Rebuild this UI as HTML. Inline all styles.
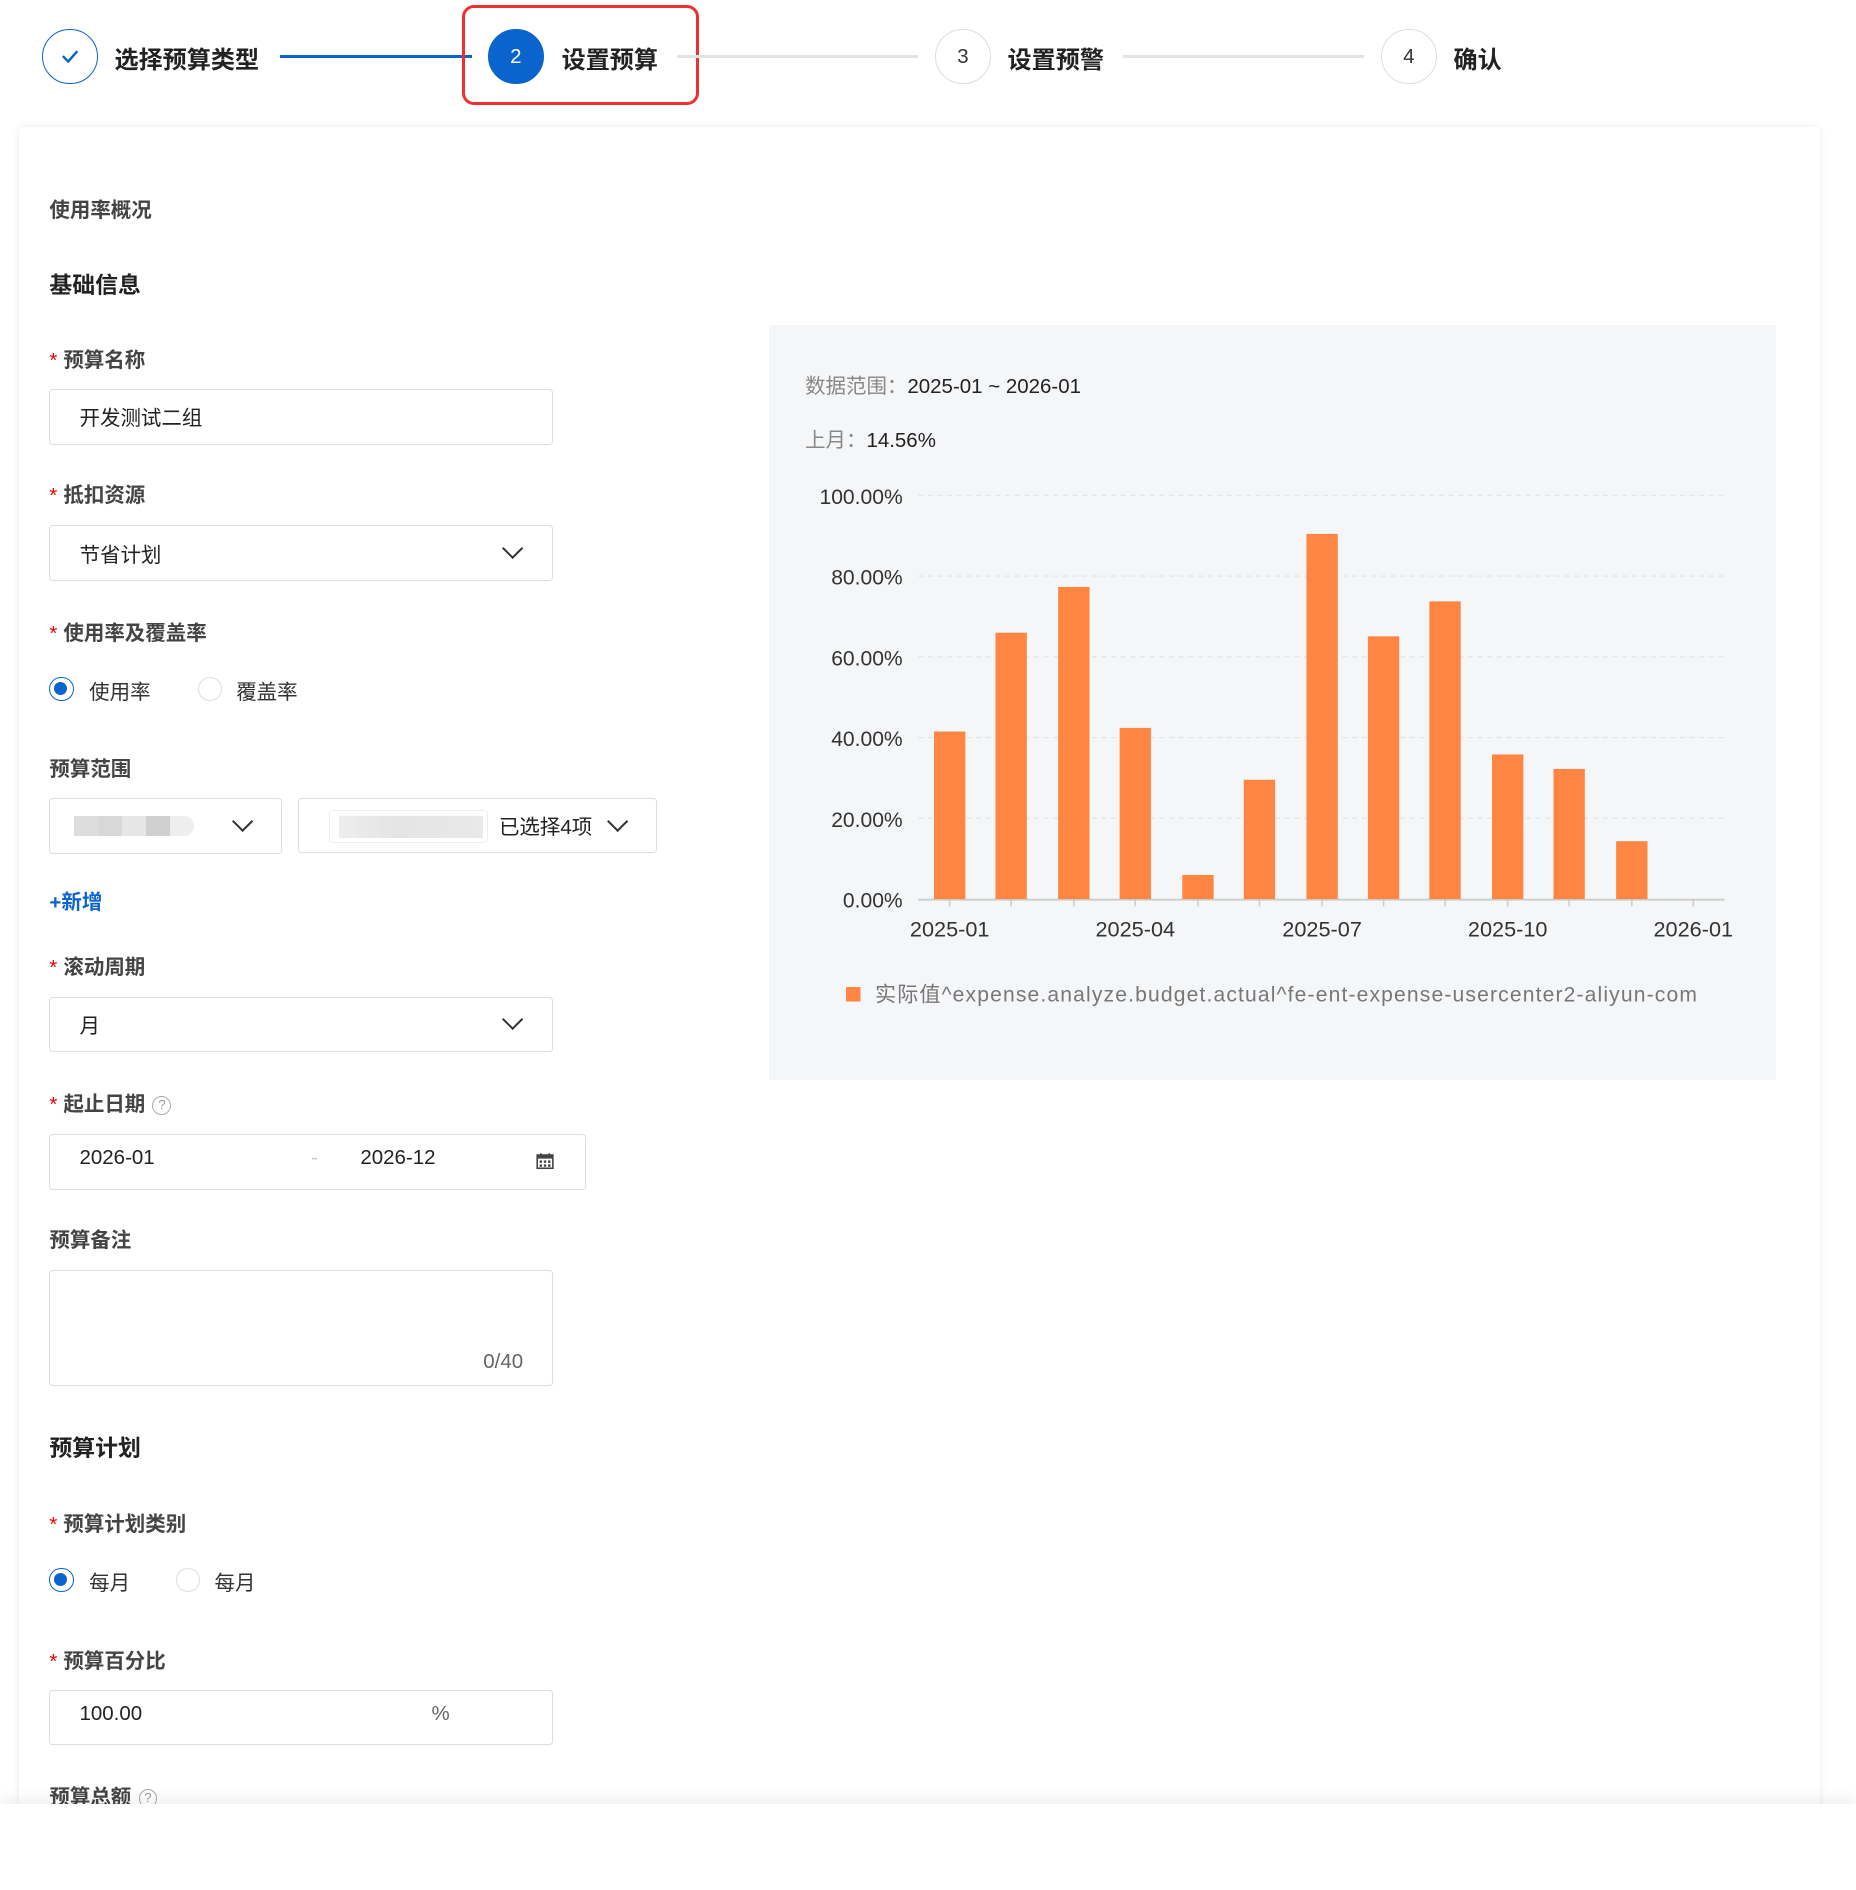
<!DOCTYPE html>
<html><head><meta charset="utf-8"><style>
html,body{margin:0;padding:0;background:#fff;}
body{width:1856px;height:1890px;overflow:hidden;position:relative;}
#w{zoom:1.2052;position:absolute;left:0;top:0;width:1540px;height:1568px;font-family:"Liberation Sans","Noto Sans CJK SC",sans-serif;color:#333;}
.a{position:absolute;white-space:nowrap;}
.circ{position:absolute;width:46px;height:46px;border-radius:50%;box-sizing:border-box;border:1px solid #ddd;text-align:center;line-height:44px;font-size:17px;color:#333;}
.st{font-size:20px;font-weight:bold;color:#222;}
.line{position:absolute;height:2px;background:#e3e3e3;top:46px;}
.card{position:absolute;left:16px;top:105px;width:1494px;height:1450px;background:#fff;box-shadow:0 0 6px rgba(0,0,0,.08);border-radius:3px;}
.lab{font-size:17px;color:#444;font-weight:bold;margin-top:-3px;}
.lab .r{color:#e00;margin-right:5px;font-weight:normal;}
.h{font-size:19px;font-weight:bold;color:#222;margin-top:-3px;}
.tx{font-size:17px;color:#222;margin-top:-2px;}
.box{position:absolute;border:1px solid #ddd;border-radius:3px;box-sizing:border-box;background:#fff;}
.chev{position:absolute;width:11px;height:11px;border-right:2px solid #333;border-bottom:2px solid #333;transform:rotate(45deg);}
.radio{position:absolute;width:20px;height:20px;border-radius:50%;box-sizing:border-box;border:1px solid #ddd;background:#fff;}
.radio.on{border:1.5px solid #0b63ce;}
.radio.on::after{content:"";position:absolute;left:3px;top:3px;width:11px;height:11px;border-radius:50%;background:#0b63ce;}
.q{display:inline-block;width:14px;height:14px;border:1px solid #aaa;border-radius:50%;font-size:11px;line-height:14px;text-align:center;color:#999;font-weight:normal;vertical-align:middle;margin-left:6px;}
</style></head><body><div id="w">
<div class="circ" style="left:35px;top:24px;border-color:#0b63ce;"><svg width="20" height="20" viewBox="0 0 20 20" style="margin-top:12px"><path d="M4 10 L8.5 14.5 L16 6" fill="none" stroke="#0b63ce" stroke-width="2"/></svg></div>
<div class="a st" style="left:95px;top:33px;">选择预算类型</div>
<div class="line" style="left:232px;width:160px;background:#0b63ce;"></div>
<div class="a" style="left:383px;top:4px;width:197px;height:83px;border:3px solid #f03030;border-radius:10px;box-sizing:border-box;"></div>
<div class="circ" style="left:405px;top:24px;background:#0b63ce;border-color:#0b63ce;color:#fff;">2</div>
<div class="a st" style="left:466px;top:33px;">设置预算</div>
<div class="line" style="left:562px;width:200px;"></div>
<div class="circ" style="left:776px;top:24px;">3</div>
<div class="a st" style="left:836px;top:33px;">设置预警</div>
<div class="line" style="left:932px;width:200px;"></div>
<div class="circ" style="left:1146px;top:24px;">4</div>
<div class="a st" style="left:1206px;top:33px;">确认</div>

<div class="card"></div>
<div class="a lab" style="left:41px;top:163px;">使用率概况</div>
<div class="a h" style="left:41px;top:224px;">基础信息</div>

<div class="a lab" style="left:41px;top:288px;"><span class="r">*</span>预算名称</div>
<div class="box" style="left:41px;top:323px;width:418px;height:46px;"></div>
<div class="a tx" style="left:66px;top:335px;">开发测试二组</div>

<div class="a lab" style="left:41px;top:400px;"><span class="r">*</span>抵扣资源</div>
<div class="box" style="left:41px;top:436px;width:418px;height:46px;"></div>
<div class="a tx" style="left:66px;top:448px;">节省计划</div>
<div class="chev" style="left:419px;top:449px;"></div>

<div class="a lab" style="left:41px;top:514px;"><span class="r">*</span>使用率及覆盖率</div>
<div class="radio on" style="left:41px;top:562px;"></div>
<div class="a tx" style="left:74px;top:562px;color:#333;">使用率</div>
<div class="radio" style="left:164px;top:562px;"></div>
<div class="a tx" style="left:196px;top:562px;color:#333;">覆盖率</div>

<div class="a lab" style="left:41px;top:627px;">预算范围</div>
<div class="box" style="left:41px;top:662px;width:193px;height:47px;"></div>
<div class="a" style="left:61px;top:677px;width:100px;height:17px;background:linear-gradient(90deg,#ddd 0 20%,#d8d8d8 20% 40%,#e6e6e6 40% 60%,#d0d0d0 60% 80%,#eee 80%);border-radius:0 9px 9px 0;"></div>
<div class="chev" style="left:195px;top:675px;"></div>
<div class="box" style="left:247px;top:662px;width:298px;height:46px;"></div>
<div class="a" style="left:273px;top:672px;width:130px;height:26px;border:1px solid #eee;border-radius:3px;"></div>
<div class="a" style="left:281px;top:677px;width:120px;height:18px;background:linear-gradient(90deg,#eee,#e4e4e4 40%,#e9e9e9);"></div>
<div class="a tx" style="left:414px;top:674px;">已选择4项</div>
<div class="chev" style="left:506px;top:675px;"></div>

<div class="a" style="left:41px;top:734px;font-size:17px;color:#0b63ce;font-weight:bold;">+新增</div>

<div class="a lab" style="left:41px;top:791px;"><span class="r">*</span>滚动周期</div>
<div class="box" style="left:41px;top:827px;width:418px;height:46px;"></div>
<div class="a tx" style="left:66px;top:839px;">月</div>
<div class="chev" style="left:419px;top:840px;"></div>

<div class="a lab" style="left:41px;top:905px;"><span class="r">*</span>起止日期<span class="q">?</span></div>
<div class="box" style="left:41px;top:941px;width:445px;height:46px;"></div>
<div class="a tx" style="left:66px;top:953px;">2026-01</div>
<div class="a" style="left:258px;top:951px;color:#ccc;font-size:17px;">-</div>
<div class="a tx" style="left:299px;top:953px;">2026-12</div>
<svg class="a" style="left:445px;top:956px;" width="15" height="15" viewBox="0 0 15 15"><rect x="1" y="2.5" width="13" height="11" fill="none" stroke="#444" stroke-width="1.3"/><rect x="1" y="2.5" width="13" height="3" fill="#444"/><path d="M4 1v3M11 1v3" stroke="#444" stroke-width="1.3"/><g fill="#444"><rect x="3" y="7" width="2" height="2"/><rect x="6.5" y="7" width="2" height="2"/><rect x="10" y="7" width="2" height="2"/><rect x="3" y="10.3" width="2" height="2"/><rect x="6.5" y="10.3" width="2" height="2"/><rect x="10" y="10.3" width="2" height="2"/></g></svg>

<div class="a lab" style="left:41px;top:1018px;">预算备注</div>
<div class="box" style="left:41px;top:1054px;width:418px;height:96px;"></div>
<div class="a" style="left:401px;top:1120px;font-size:17px;color:#666;">0/40</div>

<div class="a h" style="left:41px;top:1189px;">预算计划</div>
<div class="a lab" style="left:41px;top:1253px;"><span class="r">*</span>预算计划类别</div>
<div class="radio on" style="left:41px;top:1301px;"></div>
<div class="a tx" style="left:74px;top:1301px;color:#333;">每月</div>
<div class="radio" style="left:146px;top:1301px;"></div>
<div class="a tx" style="left:178px;top:1301px;color:#333;">每月</div>

<div class="a lab" style="left:41px;top:1367px;"><span class="r">*</span>预算百分比</div>
<div class="box" style="left:41px;top:1402px;width:418px;height:46px;"></div>
<div class="a tx" style="left:66px;top:1414px;">100.00</div>
<div class="a" style="left:358px;top:1412px;font-size:17px;color:#666;">%</div>

<div class="a lab" style="left:41px;top:1480px;">预算总额<span class="q">?</span></div>

<div class="a" style="left:638px;top:270px;width:836px;height:626px;background:#f5f6f8;"></div>
<div class="a" style="left:668px;top:306px;font-size:17px;color:#888;">数据范围：<span style="color:#222">2025-01 ~ 2026-01</span></div>
<div class="a" style="left:668px;top:351px;font-size:17px;color:#888;">上月：<span style="color:#222">14.56%</span></div>
<svg class="a" style="left:0;top:0;" width="1540" height="900" viewBox="0 0 1540 900" font-family="Liberation Sans, sans-serif">
<g stroke="#e2e2e2" stroke-dasharray="4 4" stroke-width="1">
<line x1="762" y1="411" x2="1430" y2="411"/><line x1="762" y1="478" x2="1430" y2="478"/><line x1="762" y1="545" x2="1430" y2="545"/><line x1="762" y1="612" x2="1430" y2="612"/><line x1="762" y1="679" x2="1430" y2="679"/>
</g>
<line x1="762" y1="746.5" x2="1431" y2="746.5" stroke="#ccc" stroke-width="1.5"/>
<g font-size="17.5" fill="#333" text-anchor="end">
<text x="749" y="418">100.00%</text><text x="749" y="485">80.00%</text><text x="749" y="552">60.00%</text><text x="749" y="619">40.00%</text><text x="749" y="686">20.00%</text><text x="749" y="753">0.00%</text>
</g>
<g fill="#ff8543">
<rect x="775" y="607" width="26" height="139"/>
<rect x="826" y="525" width="26" height="221"/>
<rect x="878" y="487" width="26" height="259"/>
<rect x="929" y="604" width="26" height="142"/>
<rect x="981" y="726" width="26" height="20"/>
<rect x="1032" y="647" width="26" height="99"/>
<rect x="1084" y="443" width="26" height="303"/>
<rect x="1135" y="528" width="26" height="218"/>
<rect x="1186" y="499" width="26" height="247"/>
<rect x="1238" y="626" width="26" height="120"/>
<rect x="1289" y="638" width="26" height="108"/>
<rect x="1341" y="698" width="26" height="48"/>
</g>
<g stroke="#ccc" stroke-width="1.3">
<line x1="788" y1="747" x2="788" y2="752"/><line x1="839" y1="747" x2="839" y2="752"/><line x1="891" y1="747" x2="891" y2="752"/><line x1="942" y1="747" x2="942" y2="752"/><line x1="994" y1="747" x2="994" y2="752"/><line x1="1045" y1="747" x2="1045" y2="752"/><line x1="1097" y1="747" x2="1097" y2="752"/><line x1="1148" y1="747" x2="1148" y2="752"/><line x1="1199" y1="747" x2="1199" y2="752"/><line x1="1251" y1="747" x2="1251" y2="752"/><line x1="1302" y1="747" x2="1302" y2="752"/><line x1="1354" y1="747" x2="1354" y2="752"/><line x1="1405" y1="747" x2="1405" y2="752"/>
</g>
<g font-size="18" fill="#333" text-anchor="middle">
<text x="788" y="777">2025-01</text><text x="942" y="777">2025-04</text><text x="1097" y="777">2025-07</text><text x="1251" y="777">2025-10</text><text x="1405" y="777">2026-01</text>
</g>
<rect x="702" y="819" width="12" height="12" fill="#ff8543"/>
<text x="726" y="831" font-size="17.5" fill="#777" textLength="682" lengthAdjust="spacing" font-family="Liberation Sans, Noto Sans CJK SC, sans-serif">实际值^expense.analyze.budget.actual^fe-ent-expense-usercenter2-aliyun-com</text>
</svg>

<div class="a" style="left:0;top:1497px;width:1540px;height:71px;background:#fff;box-shadow:0 -6px 10px rgba(0,0,0,.05);"></div>
</div></body></html>
